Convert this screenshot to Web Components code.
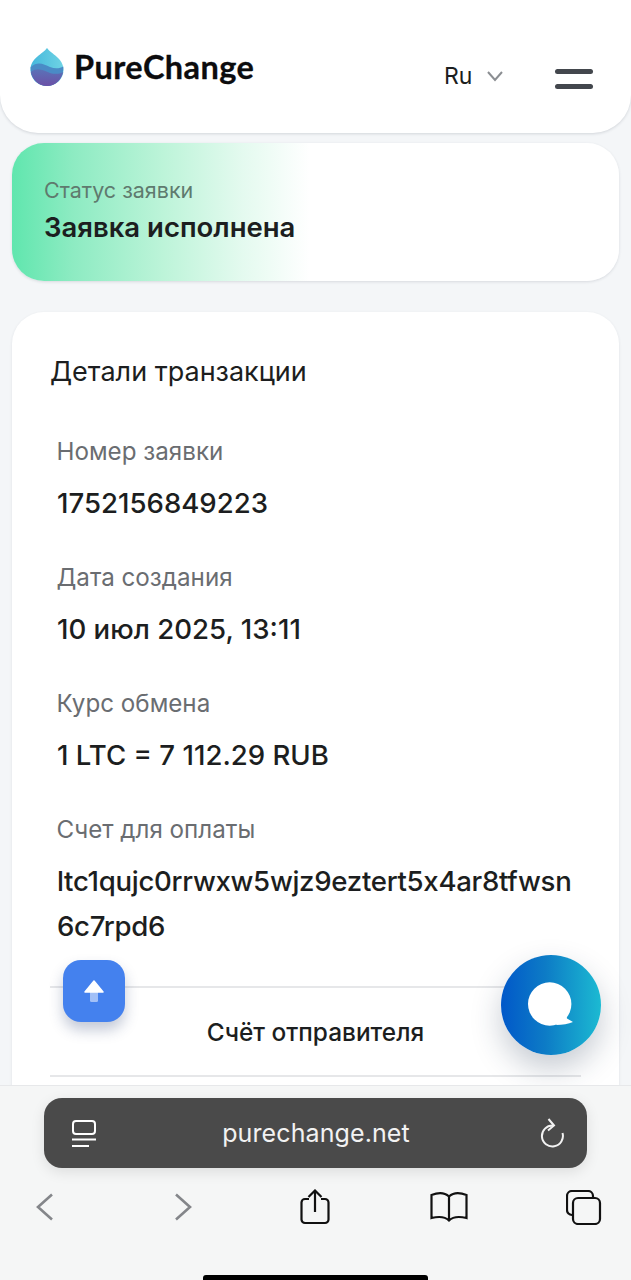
<!DOCTYPE html>
<html lang="ru">
<head>
<meta charset="utf-8">
<title>PureChange</title>
<style>
  html, body { margin: 0; padding: 0; }
  body {
    width: 631px;
    height: 1280px;
    overflow: hidden;
    position: relative;
    background: #f4f6f8;
    font-family: Inter, "Liberation Sans", sans-serif;
    color: #1c1e20;
  }
  main { display: flex; flex-direction: column; }
</style>
</head>
<body>
<main>
  <pc-header></pc-header>
  <status-card label="Статус заявки" value="Заявка исполнена"></status-card>
  <details-card heading="Детали транзакции">
    <detail-row label="Номер заявки">1752156849223</detail-row>
    <detail-row label="Дата создания">10 июл 2025, 13:11</detail-row>
    <detail-row label="Курс обмена">1 LTC = 7 112.29 RUB</detail-row>
    <detail-row label="Счет для оплаты" address>ltc1qujc0rrwxw5wjz9eztert5x4ar8tfwsn6c7rpd6</detail-row>
    <fold-row>Счёт отправителя</fold-row>
  </details-card>
</main>
<scroll-up></scroll-up>
<chat-fab></chat-fab>
<safari-bar url="purechange.net"></safari-bar>

<script>
class PcHeader extends HTMLElement {
  constructor() {
    super();
    this.attachShadow({ mode: 'open' }).innerHTML = `
      <style>
        :host {
          display: flex;
          align-items: flex-start;
          box-sizing: border-box;
          height: 133px;
          padding: 48px 0 0 30px;
          background: #fff;
          border-radius: 0 0 38px 38px;
          box-shadow: 0 1px 3px rgba(40,50,70,.16);
        }
        .logo { display: flex; align-items: center; gap: 10px; width: 414px; }
        .name { font: 700 32.5px/38px Lato, sans-serif; color: #0c0c0e; letter-spacing: .4px; margin-top: -1px; -webkit-text-stroke: .3px #0c0c0e; }
        .lang { display: flex; align-items: center; gap: 14px; width: 111px; margin-top: 13px; font-size: 23px; line-height: 30px; color: #1c1e20; }
        .burger { display: flex; flex-direction: column; gap: 10px; margin-top: 21px; }
        .burger i { display: block; width: 38px; height: 5px; border-radius: 3px; background: #43474d; }
      </style>
      <div class="logo">
        <svg width="34" height="38" viewBox="0 0 34 38">
          <defs>
            <linearGradient id="top" x1="0" y1="0" x2="1" y2="0">
              <stop offset="0" stop-color="#45b8dc"/><stop offset="1" stop-color="#6fd3e4"/>
            </linearGradient>
            <linearGradient id="low" x1="0" y1="0" x2="0" y2="1">
              <stop offset="0" stop-color="#5a72b8"/><stop offset="1" stop-color="#6c50a6"/>
            </linearGradient>
          </defs>
          <path d="M17 0C21 6 33.500 10 33.500 22C33.500 31 26 38 17 38S.5 31 .5 22C.5 10 13 6 17 0Z" fill="url(#top)"/>
          <path d="M.7 19C8 12.500 14 16.500 20 19C25 21 30 20.500 33.300 18.500C34 28 27 38 17 38S0 29 .7 19Z" fill="#4a8bc6"/>
          <path d="M.8 24C8 18.500 14 23 20 25C25 26.500 30 26 33.200 24C31.500 32 25 38 17 38S2.500 32 .8 24Z" fill="url(#low)"/>
        </svg>
        <span class="name">PureChange</span>
      </div>
      <div class="lang">
        <span>Ru</span>
        <svg width="18" height="12" viewBox="0 0 18 12"><path d="M2 2l7 8 7-8" fill="none" stroke="#8b8e92" stroke-width="2"/></svg>
      </div>
      <div class="burger"><i></i><i></i></div>
    `;
  }
}

class StatusCard extends HTMLElement {
  constructor() {
    super();
    this.attachShadow({ mode: 'open' }).innerHTML = `
      <style>
        :host {
          display: block;
          box-sizing: border-box;
          height: 138px;
          margin: 10px 12px 0;
          padding: 34px 32px 0;
          border-radius: 32px;
          background: linear-gradient(90deg, #60e6ae 0%, #8debc2 10%, #bdf4d9 25%, #e4faef 38%, #fff 49%);
          box-shadow: 0 1px 3px rgba(40,50,70,.14);
        }
        .label { font-size: 21.500px; line-height: 26px; color: #5f7a6e; }
        .value { font-size: 27.500px; line-height: 34px; font-weight: 560; color: #1c1e20; margin-top: 7px; }
      </style>
      <div class="label"></div>
      <div class="value"></div>
    `;
    this.shadowRoot.querySelector('.label').textContent = this.getAttribute('label');
    this.shadowRoot.querySelector('.value').textContent = this.getAttribute('value');
  }
}

class DetailsCard extends HTMLElement {
  constructor() {
    super();
    this.attachShadow({ mode: 'open' }).innerHTML = `
      <style>
        :host {
          display: block;
          box-sizing: border-box;
          height: 900px;
          margin: 31px 12px 0;
          padding: 42px 38px 0;
          border-radius: 32px;
          background: #fff;
          box-shadow: 0 1px 3px rgba(40,50,70,.1);
        }
        h2 { margin: 0 0 47px; font-size: 27px; line-height: 36px; font-weight: 400; color: #1c1e20; }
        .rows { display: flex; flex-direction: column; }
      </style>
      <h2></h2>
      <div class="rows"><slot></slot></div>
    `;
    this.shadowRoot.querySelector('h2').textContent = this.getAttribute('heading');
  }
}

class DetailRow extends HTMLElement {
  constructor() {
    super();
    this.attachShadow({ mode: 'open' }).innerHTML = `
      <style>
        :host { display: block; padding: 0 0 37.500px 7px; }
        .label { font-size: 24.200px; line-height: 30px; color: #6a6d71; margin-left: -.5px; }
        .value { margin-top: 13.500px; font-size: 27.600px; line-height: 45px; font-weight: 450; color: #1c1e20; overflow-wrap: anywhere; }
        :host([address]) .value { font-feature-settings: "calt" 0; letter-spacing: -.3px; }
      </style>
      <div class="label"></div>
      <div class="value"><slot></slot></div>
    `;
    this.shadowRoot.querySelector('.label').textContent = this.getAttribute('label');
  }
}

class FoldRow extends HTMLElement {
  constructor() {
    super();
    this.attachShadow({ mode: 'open' }).innerHTML = `
      <style>
        :host {
          display: block;
          height: 87px;
          border-top: 2px solid #e6e7e9;
          border-bottom: 2px solid #e6e7e9;
          text-align: center;
          font-size: 24.400px;
          line-height: 88px;
          font-weight: 450;
          color: #1c1e20;
        }
      </style>
      <slot></slot>
    `;
  }
}

class ScrollUp extends HTMLElement {
  constructor() {
    super();
    this.attachShadow({ mode: 'open' }).innerHTML = `
      <style>
        :host {
          position: absolute;
          left: 63px;
          top: 960px;
          width: 62px;
          height: 62px;
          display: flex;
          align-items: center;
          justify-content: center;
          border-radius: 18px;
          background: #4481ee;
          box-shadow: 0 8px 14px rgba(40,60,110,.28);
        }
      </style>
      <svg width="20" height="22" viewBox="0 0 20 22">
        <rect x="6" y="10" width="8" height="12" rx="1.500" fill="#fff" fill-opacity=".5"/>
        <path d="M10 1L19 12H1Z" fill="#fff" stroke="#fff" stroke-width="1.500" stroke-linejoin="round"/>
      </svg>
    `;
  }
}

class ChatFab extends HTMLElement {
  constructor() {
    super();
    this.attachShadow({ mode: 'open' }).innerHTML = `
      <style>
        :host {
          position: absolute;
          left: 501px;
          top: 955px;
          width: 100px;
          height: 100px;
          display: flex;
          align-items: center;
          justify-content: center;
          border-radius: 50%;
          background: linear-gradient(90deg, #0158c9 0%, #0d7cc6 45%, #1cbad2 100%);
          box-shadow: 0 14px 30px rgba(30,50,80,.25);
        }
      </style>
      <svg width="46" height="46" viewBox="0 0 46 46">
        <circle cx="21.700" cy="22" r="21.700" fill="#fff"/>
        <path d="M37 31L39 36.500L45 40Q38 43 28 43Z" fill="#fff"/>
      </svg>
    `;
  }
}

class SafariBar extends HTMLElement {
  constructor() {
    super();
    this.attachShadow({ mode: 'open' }).innerHTML = `
      <style>
        :host {
          position: absolute;
          left: 0;
          right: 0;
          bottom: 0;
          height: 195px;
          box-sizing: border-box;
          padding: 12px 44px 0;
          background: #f5f6f6;
          border-top: 1px solid #e7e8ea;
        }
        .address {
          display: grid;
          grid-template-columns: 1fr auto 1fr;
          align-items: center;
          height: 70px;
          padding: 0 23px 0 28px;
          border-radius: 18px;
          background: #4a4a4a;
          color: #fff;
          box-shadow: 0 4px 14px rgba(0,0,0,.1);
        }
        .url { font-size: 25px; letter-spacing: .1px; color: #f2f2f2; padding-right: 4px; }
        .address svg:last-child { justify-self: end; }
        .tools {
          display: grid;
          grid-template-columns: 138px 126px 130px 136px auto;
          align-items: center;
          height: 36px;
          margin: 21px 0 0 -8px;
        }
        svg { display: block; }
        .home {
          position: absolute;
          left: 203px;
          bottom: 0;
          width: 225px;
          height: 5px;
          border-radius: 3px 3px 0 0;
          background: #000;
        }
      </style>
      <div class="address">
        <svg width="24" height="27" viewBox="0 0 24 27" fill="none" stroke="#fff" stroke-width="2">
          <rect x="1" y="1" width="22" height="13" rx="3"/>
          <path d="M0 19.500h24M0 26h17"/>
        </svg>
        <span class="url"></span>
        <svg width="24" height="30" viewBox="0 0 24 30" fill="none" stroke="#f2f2f2" stroke-width="2">
          <path d="M13 7.500A10.500 10.500 0 1 0 22.500 15"/>
          <path d="M8.500 1L14 7.500L8 12.500"/>
        </svg>
      </div>
      <div class="tools">
        <svg width="18" height="28" viewBox="0 0 18 28" fill="none" stroke="#84868a" stroke-width="2.600"><path d="M16 1.500L2 14l14 12.500"/></svg>
        <svg width="18" height="28" viewBox="0 0 18 28" fill="none" stroke="#84868a" stroke-width="2.600"><path d="M2 1.500L16 14 2 26.500"/></svg>
        <svg width="30" height="36" viewBox="0 0 30 36" fill="none" stroke="#111" stroke-width="2.200">
          <path d="M9 10H5a3.500 3.500 0 0 0-3.500 3.500v17A3.500 3.500 0 0 0 5 34h20a3.500 3.500 0 0 0 3.500-3.500v-17A3.500 3.500 0 0 0 25 10h-4"/>
          <path d="M15 23V1.500M8.500 8L15 1.500 21.500 8"/>
        </svg>
        <svg width="38" height="30" viewBox="0 0 38 30" fill="none" stroke="#111" stroke-width="2.200">
          <path d="M19 28.500C15 24.500 8 24.500 1.500 26V3C8 .5 15 .8 19 4.500C23 .8 30 .5 36.500 3V26C30 24.500 23 24.500 19 28.500ZM19 4.500V28.500"/>
        </svg>
        <svg width="36" height="35" viewBox="0 0 36 35" fill="none" stroke="#111" stroke-width="2.200">
          <path d="M7 25H6a5 5 0 0 1-5-5V6a5 5 0 0 1 5-5h16a5 5 0 0 1 5 5v2"/>
          <rect x="7" y="8" width="27" height="26" rx="5"/>
        </svg>
      </div>
      <div class="home"></div>
    `;
    this.shadowRoot.querySelector('.url').textContent = this.getAttribute('url');
  }
}

customElements.define('pc-header', PcHeader);
customElements.define('status-card', StatusCard);
customElements.define('details-card', DetailsCard);
customElements.define('detail-row', DetailRow);
customElements.define('fold-row', FoldRow);
customElements.define('scroll-up', ScrollUp);
customElements.define('chat-fab', ChatFab);
customElements.define('safari-bar', SafariBar);
</script>
</body>
</html>
